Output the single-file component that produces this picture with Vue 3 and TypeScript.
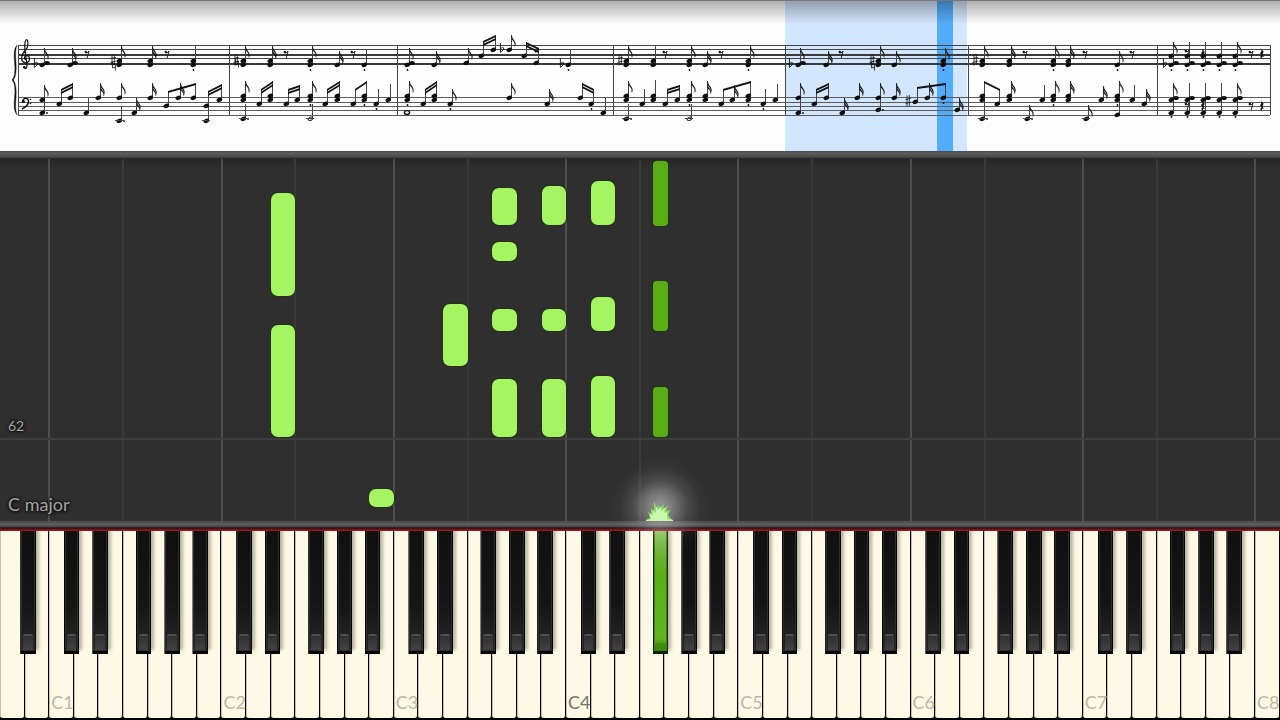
<script setup lang="ts">
interface Chord {
  x: number
  ys: number[]
  top: number
  flags: number
  side: number | null
  dot: boolean
  stacc: number | null
  hollow: boolean
}

const chords: Chord[] = []
const beams: { x1: number; y1: number; x2: number; y2: number; double: boolean }[] = []

interface Extra { side?: number; dot?: boolean; stacc?: number; hollow?: boolean }

function note(x: number, ys: number[], top: number, flags = 0, extra: Extra = {}) {
  chords.push({
    x, ys, top, flags,
    side: extra.side ?? null,
    dot: extra.dot ?? false,
    stacc: extra.stacc ?? null,
    hollow: extra.hollow ?? false,
  })
}

function beam(count: 1 | 2, a: [number, number[], number], b: [number, number[], number], extra: Extra = {}) {
  note(a[0], a[1], a[2])
  note(b[0], b[1], b[2], 0, extra)
  beams.push({ x1: a[0] + 2, y1: a[2], x2: b[0] + 3, y2: b[2], double: count === 2 })
}

// Measure 1
note(42, [65], 48, 1, { side: 63 })
note(70, [65], 48, 2, { side: 63 })
note(119, [61, 65], 46, 1)
note(150, [61, 65], 46, 2)
note(193, [61, 65], 46, 0, { stacc: 70 })
note(42, [100, 113], 85, 1, { dot: true })
beam(2, [59, [104], 89], [70, [98], 83])
note(86, [113], 98)
note(98, [98], 83, 2)
note(119, [98], 83, 1)
note(119, [121], 106, 0, { dot: true })
note(134, [113], 98, 2)
note(150, [98], 83, 2)
beam(1, [166, [106], 91], [193, [98], 83])
note(178, [98], 83, 2)
beam(2, [206, [106, 121], 91], [219, [100], 84])

// Measure 2
note(243, [61, 65], 46, 1)
note(270, [61, 65], 46, 2)
note(310, [61, 65], 46, 1, { stacc: 70 })
note(337, [65], 51, 2)
note(364, [65], 50, 0, { stacc: 70 })
note(243, [96, 100], 81, 1)
note(243, [119], 104, 0, { dot: true })
beam(2, [259, [104], 89], [270, [96, 100], 81])
beam(2, [286, [104], 89], [297, [100], 85])
note(310, [96, 100], 81, 1, { stacc: 105 })
note(310, [119], 104, 0, { hollow: true })
beam(2, [325, [104], 89], [337, [96, 100], 81])
beam(1, [353, [104], 89], [364, [96, 100], 81], { stacc: 105 })
note(376, [104], 89, 0, { stacc: 109 })
note(388, [100], 84)

// Measure 3
note(407, [65], 48, 1, { side: 63, stacc: 70 })
note(434, [65], 51, 2)
note(466, [63], 48, 1)
beam(2, [481, [56], 41], [493, [50], 35])
note(509, [50], 35, 1)
beam(2, [524, [56], 42], [536, [63], 48])
note(568, [65], 50, 0, { stacc: 70 })
note(407, [96, 100], 81, 1, { stacc: 105 })
beam(2, [423, [104], 89], [434, [96, 100], 81])
note(450, [104], 89, 1, { stacc: 109 })
note(509, [98], 83, 1)
note(547, [104], 89, 2)
beam(2, [580, [98], 83], [591, [104], 89], { stacc: 109 })
note(603, [113], 97)

// Measure 4
note(626, [61, 65], 46, 1)
note(653, [61, 65], 46)
note(689, [61, 65], 46, 1, { stacc: 70 })
note(705, [65], 51, 2)
note(748, [61, 65], 46, 1, { stacc: 70 })
note(626, [96, 100], 81, 1)
note(626, [119], 104, 0, { dot: true })
note(642, [104], 89)
note(653, [96, 100], 80)
beam(2, [665, [104], 89], [677, [100], 85])
note(689, [96, 100], 81, 1, { stacc: 105 })
note(689, [119], 104, 0, { hollow: true })
note(705, [96, 100], 81, 2)
beam(1, [721, [104], 89], [748, [96, 100], 81], { stacc: 105 })
note(732, [100], 85, 2)
note(763, [104], 89, 0, { stacc: 109 })
note(775, [100], 84)

// Measure 5
note(798, [65], 48, 1, { side: 63 })
note(826, [65], 51, 2)
note(878, [61, 65], 46, 1)
note(894, [65], 51, 1)
note(943, [61, 65], 48, 1, { stacc: 70 })
note(798, [98, 113], 83, 1, { dot: true })
beam(2, [814, [104], 89], [826, [98], 83])
note(842, [113], 98, 2)
note(857, [98], 83, 2)
note(878, [98, 110], 83, 1, { dot: true })
note(894, [98], 83, 2)
beam(1, [915, [102], 87], [943, [98], 83], { stacc: 103 })
note(927, [98], 83, 2)
note(957, [110], 98, 2)

// Measure 6
note(982, [61, 65], 46, 1)
note(1009, [61, 65], 46, 2)
note(1053, [61, 65], 46, 1, { stacc: 70 })
note(1068, [61, 65], 46, 2)
note(1117, [65], 51, 1, { stacc: 70 })
beam(1, [982, [96, 100, 119], 81], [997, [104], 89])
note(1009, [96, 100], 81, 2)
note(1027, [119], 105, 1, { dot: true })
note(1042, [100], 85)
note(1053, [96, 100], 81, 1, { stacc: 105 })
note(1068, [96, 100], 81, 2)
note(1086, [119], 105, 1)
note(1101, [100], 86, 2)
note(1117, [96, 100, 115], 81, 1, { stacc: 105 })
note(1132, [100], 85)
note(1144, [104], 89, 2)

// Measure 7
for (const [x, upper, lower] of [[1171, 1, 1], [1187, 0, 0], [1203, 0, 0], [1219, 0, 0], [1235, 1, 1]]) {
  note(x, [56, 65], 42, upper, { side: 63, stacc: 70 })
  note(x, [100, 113], 83, lower, { side: 98, stacc: 117 })
}

const trebleLines = [45, 49, 54, 58, 63]
const bassLines = [97, 102, 106, 110, 115]
const barlines = [18, 229, 397, 613, 785, 968, 1157, 1270]
const eighthRests: [number, number][] = [
  [87, 54], [167, 54], [286, 54], [353, 54], [665, 54], [721, 54], [841, 54],
  [1025, 54], [1085, 54], [1132, 54], [1251, 54], [1251, 106], [1187, 53], [1187, 106],
]
const quarterRests: [number, number][] = [[1262, 54], [1262, 106], [1203, 54], [1203, 106]]
const flats: [number, number][] = [[36, 64], [502, 49], [562, 64], [791, 64], [1165, 64]]
const sharps: [number, number][] = [[113, 60], [236, 60], [620, 60], [872, 60], [908, 101], [975, 60]]
const naturals: [number, number][] = [[114, 66], [237, 63], [873, 66]]

// Falling notes: white-key units across, pixels of the 362-unit-high lane down
const WHITE_KEYS = 52
const LANE = 362
const BLACK_WIDTH = 0.634
const blackOffsets = [0.593, 1.75, 3.52, 4.68, 5.82]

const falling = [
  { key: 11, from: 34, to: 137 }, { key: 11, from: 166, to: 278 },
  { key: 15, from: 330, to: 348 }, { key: 18, from: 145, to: 207 },
  { key: 20, from: 29, to: 66 }, { key: 20, from: 83, to: 102 }, { key: 20, from: 150, to: 172 }, { key: 20, from: 220, to: 278 },
  { key: 22, from: 27, to: 66 }, { key: 22, from: 150, to: 172 }, { key: 22, from: 220, to: 278 },
  { key: 24, from: 22, to: 66 }, { key: 24, from: 138, to: 172 }, { key: 24, from: 217, to: 278 },
  { key: 26.52, from: 2, to: 67 }, { key: 26.52, from: 122, to: 172 }, { key: 26.52, from: 228, to: 278 },
].map((n) => {
  const black = !Number.isInteger(n.key)
  return {
    black,
    style: {
      left: pct(n.key / WHITE_KEYS),
      width: pct((black ? BLACK_WIDTH : 1) / WHITE_KEYS),
      top: pct(n.from / LANE),
      height: pct((n.to - n.from) / LANE),
    },
  }
})

function pct(v: number) {
  return (v * 100).toFixed(3) + '%'
}

const gridLines = Array.from({ length: 8 }, (_, o) => [
  { left: pct((2 + o * 7) / WHITE_KEYS), major: true },
  { left: pct((5 + o * 7) / WHITE_KEYS), major: false },
]).flat().filter((g) => parseFloat(g.left) < 100)

const letters = ['A', 'B', 'C', 'D', 'E', 'F', 'G']
const whiteKeys = Array.from({ length: WHITE_KEYS }, (_, i) => {
  const name = letters[i % 7] + Math.floor((i + 5) / 7)
  return { name, label: name.startsWith('C') ? name : '' }
})

const blackNames = ['C♯', 'D♯', 'F♯', 'G♯', 'A♯']
const blackKeys = [{ name: 'A♯0', pos: 0.82 }]
for (let o = 0; o < 7; o++) {
  blackOffsets.forEach((off, i) => blackKeys.push({ name: blackNames[i] + (o + 1), pos: 2 + o * 7 + off }))
}
const pressed = 'F♯4'
</script>

<template>
  <main class="app">
    <section class="score">
      <svg class="sheet" viewBox="0 0 1280 151" role="img" aria-label="Sheet music">
        <defs>
          <linearGradient id="topShade" x1="0" y1="0" x2="0" y2="1">
            <stop offset="0" stop-color="#000" stop-opacity=".32" />
            <stop offset=".5" stop-color="#000" stop-opacity=".16" />
            <stop offset="1" stop-color="#000" stop-opacity="0" />
          </linearGradient>
          <g id="rest8">
            <circle cx="-1.2" cy="-2" r="1.2" />
            <path d="M-1.5-1.2Q1.5-.8 2-3L.2 4" fill="none" stroke="#111" stroke-width=".9" />
          </g>
          <path id="rest4" d="M-1.4-6L1.8-2Q-.4 0 1.8 3Q-1.4 1.6.6 5.8Q-3.4 2.6-.4 1.6L-2-1Q.6-3-1.4-6Z" />
          <path id="flat" d="M-1.6-6V3.4Q2.4.6 1.8-1Q.8-2.6-1.4-.4" fill="none" stroke="#111" stroke-width=".9" />
          <path id="sharp" d="M-1-5.500V5.500M1.300-6V5M-2.600-1.400L2.800-2.600M-2.600 2.400L2.800 1.200" fill="none" stroke="#111" stroke-width=".8" />
          <path id="natural" d="M-1.400-4.500V2L1.600 1M1.400 4.500V-2L-1.400-1" fill="none" stroke="#111" stroke-width=".8" />
        </defs>
        <rect width="1280" height="151" fill="#fdfdfd" />
        <rect x="785" width="182" height="151" fill="#d2e6fd" />
        <rect x="937" width="16" height="151" fill="#53acfb" />

        <g shape-rendering="crispEdges">
          <rect v-for="(y, i) in trebleLines" :key="'t' + y" x="18" :y="y" width="1252" :height="i === 2 || i === 4 ? 2 : 1" :fill="i === 2 || i === 4 ? '#3a3a3a' : '#444'" />
          <rect v-for="y in bassLines" :key="'b' + y" x="18" :y="y" width="1252" height="1" fill="#5c5c5c" />
          <rect v-for="x in barlines" :key="'l' + x" :x="x" y="45" width="1" height="70" fill="#444" />
        </g>

        <path d="M17 45Q13 49 14.500 62Q16 76 12 80Q16 84 14.500 98Q13 111 17 115Q15 110 16 98Q17 85 13.500 80Q17 75 16 62Q15 50 17 45Z" fill="#111" stroke="#111" stroke-width=".4" />
        <path d="M25.500 60Q23.500 57.500 25.500 56Q29 54.500 29.500 58.500Q29.500 62.500 25.500 62.800Q21.300 62 21.700 57.500Q22.300 53 26 49.500Q28.500 46.500 27.700 41Q26.800 38 25.500 41Q24.300 44 25 50L27 65Q27 69 24.500 68.500" fill="none" stroke="#111" stroke-width="1.200" />
        <circle cx="24.300" cy="67.200" r="1.300" fill="#111" />
        <path d="M22 109Q28.500 106 28.500 101Q28 97.500 24.500 98.500Q21.500 100.500 23 102.500" fill="none" stroke="#111" stroke-width="1.500" />
        <circle cx="23.500" cy="101.500" r="1.500" fill="#111" />
        <circle cx="30.500" cy="99.500" r=".8" fill="#111" />
        <circle cx="30.500" cy="103.500" r=".8" fill="#111" />

        <g v-for="(c, i) in chords" :key="i" fill="#0c0c0c">
          <rect :x="c.x + 2" :y="c.top" width="1" :height="Math.max(...c.ys) - c.top" fill="#444" />
          <template v-for="y in c.ys" :key="y">
            <ellipse v-if="c.hollow" :cx="c.x + .5" :cy="y" rx="2.400" ry="1.600" fill="none" stroke="#222" stroke-width=".9" :transform="`rotate(-25 ${c.x} ${y})`" />
            <ellipse v-else :cx="c.x + .3" :cy="y" rx="2.900" ry="2.100" :transform="`rotate(-25 ${c.x} ${y})`" />
            <rect v-if="y > 118" :x="c.x - 4" :y="y - 1" width="8" height="1" fill="#444" />
          </template>
          <ellipse v-if="c.side !== null" :cx="c.x + 5" :cy="c.side" rx="2.800" ry="2" />
          <path v-if="c.flags > 0" :transform="`translate(${c.x + 2.5} ${c.top})`" d="M0 0Q.6 3.400 2.600 5.400Q4.800 8 3.400 11.500Q4 8 2 6.200L0 3.800Z" stroke="#222" stroke-width=".3" />
          <path v-if="c.flags > 1" :transform="`translate(${c.x + 2.5} ${c.top + 4})`" d="M0 0Q.6 2.400 2.400 4Q4.400 6 3.200 9Q3.600 6 1.600 4.600L0 3Z" stroke="#222" stroke-width=".3" />
          <circle v-if="c.dot" :cx="c.x + 5" :cy="Math.max(...c.ys)" r=".9" />
          <circle v-if="c.stacc !== null" :cx="c.x + .5" :cy="c.stacc" r=".9" />
        </g>
        <g v-for="(b, i) in beams" :key="'beam' + i" fill="#111">
          <polygon :points="`${b.x1},${b.y1} ${b.x2},${b.y2} ${b.x2},${b.y2 + 2} ${b.x1},${b.y1 + 2}`" />
          <polygon v-if="b.double" :points="`${b.x1},${b.y1 + 3} ${b.x2},${b.y2 + 3} ${b.x2},${b.y2 + 5} ${b.x1},${b.y1 + 5}`" />
        </g>
        <ellipse cx="407" cy="112.500" rx="2.600" ry="1.900" fill="none" stroke="#111" stroke-width="1.400" />
        <circle cx="987" cy="119" r=".9" fill="#111" />
        <circle cx="536" cy="51" r="1.500" fill="#111" />

        <g fill="#111">
          <use v-for="([x, y], i) in eighthRests" :key="'r' + i" href="#rest8" :x="x" :y="y" />
          <use v-for="([x, y], i) in quarterRests" :key="'q' + i" href="#rest4" :x="x" :y="y" />
          <use v-for="([x, y], i) in flats" :key="'f' + i" href="#flat" :x="x" :y="y" />
          <use v-for="([x, y], i) in sharps" :key="'s' + i" href="#sharp" :x="x" :y="y" />
          <use v-for="([x, y], i) in naturals" :key="'n' + i" href="#natural" :x="x" :y="y" />
        </g>
        <rect width="1280" height="24" fill="url(#topShade)" />
        <rect width="1280" height="1" fill="#777" />
      </svg>
    </section>
    <div class="rail rail-top"></div>

    <section class="lane">
      <span v-for="(g, i) in gridLines" :key="i" class="grid-line" :class="{ major: g.major }" :style="{ left: g.left }"></span>
      <span class="measure-line"></span>
      <span v-for="(n, i) in falling" :key="i" class="note" :class="{ black: n.black }" :style="n.style"></span>
      <span class="measure-number">62</span>
      <span class="key-name">C major</span>
      <span class="glow"></span>
      <svg class="flame" viewBox="0 0 28 20" aria-hidden="true">
        <path d="M1 19L5 17L3 11L6 13L6 7L9 10L9 0L12 7L14 4L15 7L19 3L18 8L23 5L21 10L25 9L23 14L25 17L28 19V20H1Z" fill="#8fdc62" />
        <path d="M1 20L1 19L6 18L5 13L8 14L8 9L11 12L11 5L13 9L16 6L16 10L20 7L19 12L22 11L22 18L28 19V20Z" fill="#c9f7b0" />
      </svg>
    </section>
    <div class="rail rail-bottom"></div>
    <div class="felt"></div>

    <section class="keyboard" aria-label="Piano keyboard">
      <button v-for="k in whiteKeys" :key="k.name" type="button" class="white-key" :class="{ middle: k.name === 'C4' }" :aria-label="k.name">{{ k.label }}</button>
      <button
        v-for="k in blackKeys"
        :key="k.name"
        type="button"
        class="black-key"
        :class="{ pressed: k.name === pressed }"
        :aria-label="k.name"
        :style="{ left: pct(k.pos / WHITE_KEYS), width: pct(BLACK_WIDTH / WHITE_KEYS) }"
      ><span class="face"><span class="nub"></span></span></button>
    </section>
  </main>
</template>

<style>
body {
  background: #2f2f2f;
  overflow-x: hidden;
}
</style>

<style scoped>
.app {
  display: flex;
  flex-direction: column;
  min-height: 100vh;
  font-family: Lato, "Open Sans", sans-serif;
}
.sheet {
  display: block;
  width: 100%;
  height: auto;
}
.rail {
  height: 7px;
  flex: none;
}
.rail-top {
  height: 8px;
  background: linear-gradient(#4a4a4a, #5c5c5c 30%, #444 80%, #1c1c1c);
}
.rail-bottom {
  background: linear-gradient(#4a4a4a, #5e5e5e 50%, #484848 80%, #111);
}
.felt {
  flex: none;
  height: 3px;
  background: linear-gradient(#3a0a0c, #a32028);
}
.lane {
  position: relative;
  flex: 1;
  min-height: 300px;
  background: linear-gradient(#262626, #2f2f2f 10px);
}
.grid-line {
  position: absolute;
  top: 0;
  bottom: 0;
  width: 2px;
  background: #393939;
  margin-left: -1px;
}
.grid-line.major {
  background: #4e4e4e;
}
.measure-line {
  position: absolute;
  left: 0;
  right: 0;
  top: 77%;
  height: 2px;
  background: #3e3e3e;
}
.note {
  position: absolute;
  box-sizing: border-box;
  border-radius: 7px;
  background: #a5f562;
  box-shadow: 0 0 1px 1px #263317;
}
.note.black {
  border-radius: 4px;
  background: #5bad16;
}
.measure-number,
.key-name {
  position: absolute;
  left: 8px;
  color: #a3a3a3;
  text-shadow: 0 0 3px #111, 0 1px 3px #111, 1px 0 3px #111;
  line-height: 24px;
}
.measure-number {
  bottom: 83px;
  font-size: 14px;
}
.key-name {
  bottom: 5px;
  font-size: 18px;
}
.glow {
  position: absolute;
  left: 51.6%;
  bottom: -36px;
  width: 100px;
  height: 100px;
  margin-left: -50px;
  z-index: 2;
  pointer-events: none;
  background: radial-gradient(circle closest-side, rgba(255, 255, 255, .5), rgba(255, 255, 255, .36) 25%, rgba(255, 255, 255, .13) 55%, rgba(255, 255, 255, .03) 80%, transparent);
}
.flame {
  position: absolute;
  left: 51.6%;
  bottom: 0;
  width: 28px;
  height: 20px;
  margin-left: -15px;
  z-index: 3;
}
.keyboard {
  position: relative;
  flex: none;
  display: flex;
  height: 189px;
  background: #000;
}
.white-key {
  flex: 1 1 0;
  min-width: 0;
  box-sizing: border-box;
  display: flex;
  align-items: flex-end;
  height: 187px;
  padding: 0 0 4px 2px;
  border: 0;
  border-right: 1px solid #000;
  border-radius: 0 0 3px 3px;
  background: #fef9e4;
  box-shadow: inset 1px 0 0 #c5c1b1;
  color: #bcb8a6;
  font: inherit;
  font-size: 18px;
  line-height: 24px;
}
.white-key.middle {
  color: #75736a;
}
.black-key {
  position: absolute;
  top: 0;
  height: 123px;
  padding: 0 1px 3px;
  border: 0;
  background: #050505;
  box-shadow: 3px -4px 3px rgba(60, 55, 40, .35);
  clip-path: inset(0 -8px -8px 0);
}
.face {
  display: flex;
  align-items: flex-end;
  height: 100%;
  box-sizing: border-box;
  border: 1px solid #2c2c2c;
  border-top: 0;
  background: linear-gradient(#101010, #151515 60%, #262626);
}
.nub {
  flex: 1;
  height: 14px;
  margin: 0 1px;
  border-top: 2px solid #505050;
  border-radius: 2px 2px 0 0;
  background: linear-gradient(#303030, #424242);
}
.pressed {
  z-index: 1;
  background: #0c2403;
}
.pressed .face {
  border-color: #3f8010;
  background: linear-gradient(#83bd58, #5bad16 35%, #62b520 90%, #3d8a08);
}
.pressed .nub {
  height: 7px;
  margin: 0;
  border-top: 0;
  background: #3f8d0a;
}
</style>
